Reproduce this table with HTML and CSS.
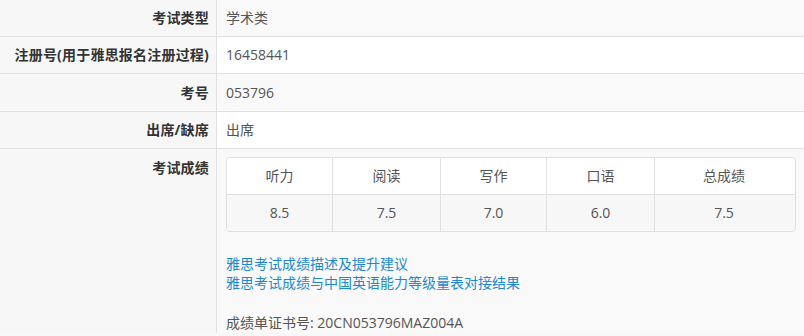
FILE: index.html
```html
<!DOCTYPE html>
<html lang="zh-CN">
<head>
<meta charset="utf-8">
<title>成绩</title>
<link rel="stylesheet" href="styles.css">
</head>
<body>
<table class="info">
  <tbody>
    <tr class="striped">
      <th>考试类型</th>
      <td>学术类</td>
    </tr>
    <tr>
      <th>注册号(用于雅思报名注册过程)</th>
      <td>16458441</td>
    </tr>
    <tr class="striped tall">
      <th>考号</th>
      <td>053796</td>
    </tr>
    <tr>
      <th>出席/缺席</th>
      <td>出席</td>
    </tr>
    <tr class="striped last">
      <th class="top">考试成绩</th>
      <td class="scores-cell">
        <div class="scores">
          <div class="srow head">
            <div class="c c1">听力</div>
            <div class="c c2">阅读</div>
            <div class="c c3">写作</div>
            <div class="c c4">口语</div>
            <div class="c c5">总成绩</div>
          </div>
          <div class="srow body">
            <div class="c c1">8.5</div>
            <div class="c c2">7.5</div>
            <div class="c c3">7.0</div>
            <div class="c c4">6.0</div>
            <div class="c c5">7.5</div>
          </div>
        </div>
        <div class="links">
          <a href="#">雅思考试成绩描述及提升建议</a>
          <a href="#">雅思考试成绩与中国英语能力等级量表对接结果</a>
        </div>
        <div class="cert">成绩单证书号: 20CN053796MAZ004A</div>
      </td>
    </tr>
  </tbody>
</table>
</body>
</html>
```
FILE: styles.css
```css
html, body {
  margin: 0;
  padding: 0;
  background: #f8f8f8;
}
body {
  font-family: "Open Sans", "Noto Sans CJK SC", sans-serif;
  font-size: 14px;
  color: #555;
  width: 804px;
  overflow: hidden;
}
.info {
  width: 804px;
  border-collapse: collapse;
  table-layout: fixed;
}
.info th {
  width: 209px;
  padding: 0 7px 0 0;
  height: 36px;
  text-align: right;
  font-weight: bold;
  color: #333;
  background: #f7f7f7;
  border-right: 1px solid #e0e0e0;
  border-bottom: 1px solid #e0e0e0;
  line-height: 20px;
  white-space: nowrap;
  letter-spacing: 0.2px;
}
.info td {
  padding: 0 9px;
  height: 36px;
  background: #fff;
  border-bottom: 1px solid #e0e0e0;
  line-height: 20px;
}
.info tr.striped td {
  background: #f9f9f9;
}
.info tr.tall th, .info tr.tall td {
  height: 37px;
}
.info th.top {
  vertical-align: top;
  padding-top: 9px;
}
.info tr.last th, .info tr.last td {
  border-bottom: none;
}
.info td.scores-cell {
  padding: 8px 8px 0 9px;
  vertical-align: top;
}
.scores {
  width: 568px;
  border: 1px solid #e0e0e0;
  border-radius: 4px;
  overflow: hidden;
}
.srow {
  display: flex;
}
.srow.head {
  background: #fff;
  border-bottom: 1px solid #e0e0e0;
}
.srow.body {
  background: #f7f7f7;
}
.c {
  height: 36px;
  line-height: 36px;
  text-align: center;
  color: #555;
  border-right: 1px solid #e0e0e0;
  box-sizing: border-box;
}
.c1 { width: 106px; }
.c2 { width: 108px; }
.c3 { width: 106px; }
.c4 { width: 108px; }
.c5 { width: 138px; border-right: none; }
.links {
  margin-top: 22px;
  display: flex;
  flex-direction: column;
}
.links a {
  color: #1a8ad2;
  text-decoration: none;
  line-height: 19px;
}
.cert {
  margin-top: 21px;
  line-height: 20px;
  color: #555;
}
```
